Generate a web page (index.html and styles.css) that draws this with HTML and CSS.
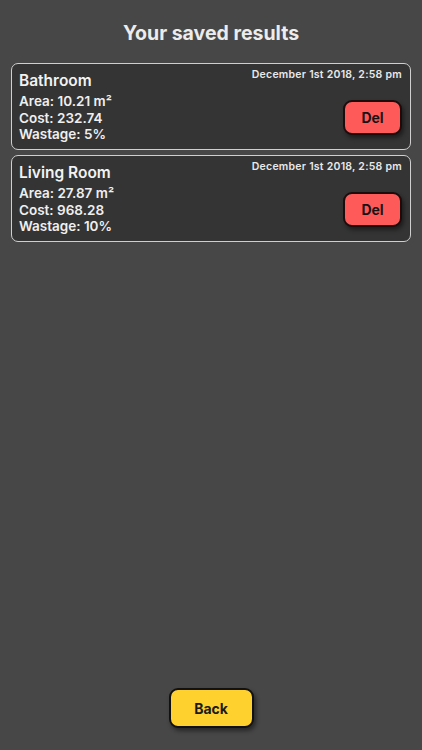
FILE: index.html
```html
<!DOCTYPE html>
<html>
<head>
<meta charset="utf-8">
<link rel="stylesheet" href="styles.css">
</head>
<body>
<div class="page">
  <h1 class="title">Your saved results</h1>
  <div class="list">
    <div class="card">
      <div class="top">
        <div class="name">Bathroom</div>
        <div class="date">December 1st 2018, 2:58 pm</div>
      </div>
      <div class="bottom">
        <div class="info">
          <div>Area: 10.21 m²</div>
          <div>Cost: 232.74</div>
          <div>Wastage: 5%</div>
        </div>
        <button class="del">Del</button>
      </div>
    </div>
    <div class="card">
      <div class="top">
        <div class="name">Living Room</div>
        <div class="date">December 1st 2018, 2:58 pm</div>
      </div>
      <div class="bottom">
        <div class="info">
          <div>Area: 27.87 m²</div>
          <div>Cost: 968.28</div>
          <div>Wastage: 10%</div>
        </div>
        <button class="del">Del</button>
      </div>
    </div>
  </div>
  <div class="footer">
    <button class="back">Back</button>
  </div>
</div>
</body>
</html>
```
FILE: styles.css
```css
html, body {
  margin: 0;
  padding: 0;
  background: #474747;
}
body {
  font-family: Inter, "Open Sans", "Liberation Sans", sans-serif;
  color: #efefef;
}
.page {
  min-height: 750px;
  display: flex;
  flex-direction: column;
}
.title {
  margin: 0 0 18px;
  padding-top: 21px;
  font-size: 19.5px;
  line-height: 24px;
  font-weight: 700;
  text-align: center;
  color: #ececec;
}
.list {
  display: flex;
  flex-direction: column;
  gap: 5px;
  padding: 0 11px;
}
.card {
  border: 1px solid #cfcfcf;
  border-radius: 7px;
  background: #343434;
  padding: 7px 8px 6px 7px;
  height: 87px;
  box-sizing: border-box;
}
.top {
  display: flex;
  justify-content: space-between;
  align-items: flex-start;
}
.name {
  font-size: 15.5px;
  line-height: 19px;
  font-weight: 600;
  color: #f2f2f2;
}
.date {
  font-size: 10.5px;
  line-height: 14px;
  font-weight: 600;
  letter-spacing: 0.25px;
  margin-top: -3px;
  color: #e8e8e8;
}
.bottom {
  display: flex;
  justify-content: space-between;
  align-items: center;
  margin-top: 3px;
}
.info {
  font-size: 13.5px;
  line-height: 16.5px;
  font-weight: 600;
  color: #efefef;
}
.del {
  width: 59px;
  height: 35px;
  box-sizing: border-box;
  background: #ff5a5a;
  border: 2px solid #1c0c0c;
  border-radius: 9px;
  font-family: Inter, "Open Sans", "Liberation Sans", sans-serif;
  font-size: 14px;
  font-weight: 700;
  color: #1a1010;
  box-shadow: 2px 3px 4px rgba(0, 0, 0, 0.45);
  padding: 0;
}
.footer {
  margin-top: auto;
  display: flex;
  justify-content: center;
  padding-bottom: 22px;
}
.back {
  width: 85px;
  height: 40px;
  box-sizing: border-box;
  background: #ffd12e;
  border: 2px solid #111;
  border-radius: 9px;
  font-family: Inter, "Open Sans", "Liberation Sans", sans-serif;
  font-size: 14px;
  font-weight: 700;
  color: #1a1a1a;
  box-shadow: 2px 3px 4px rgba(0, 0, 0, 0.45);
  padding: 0;
}
```
